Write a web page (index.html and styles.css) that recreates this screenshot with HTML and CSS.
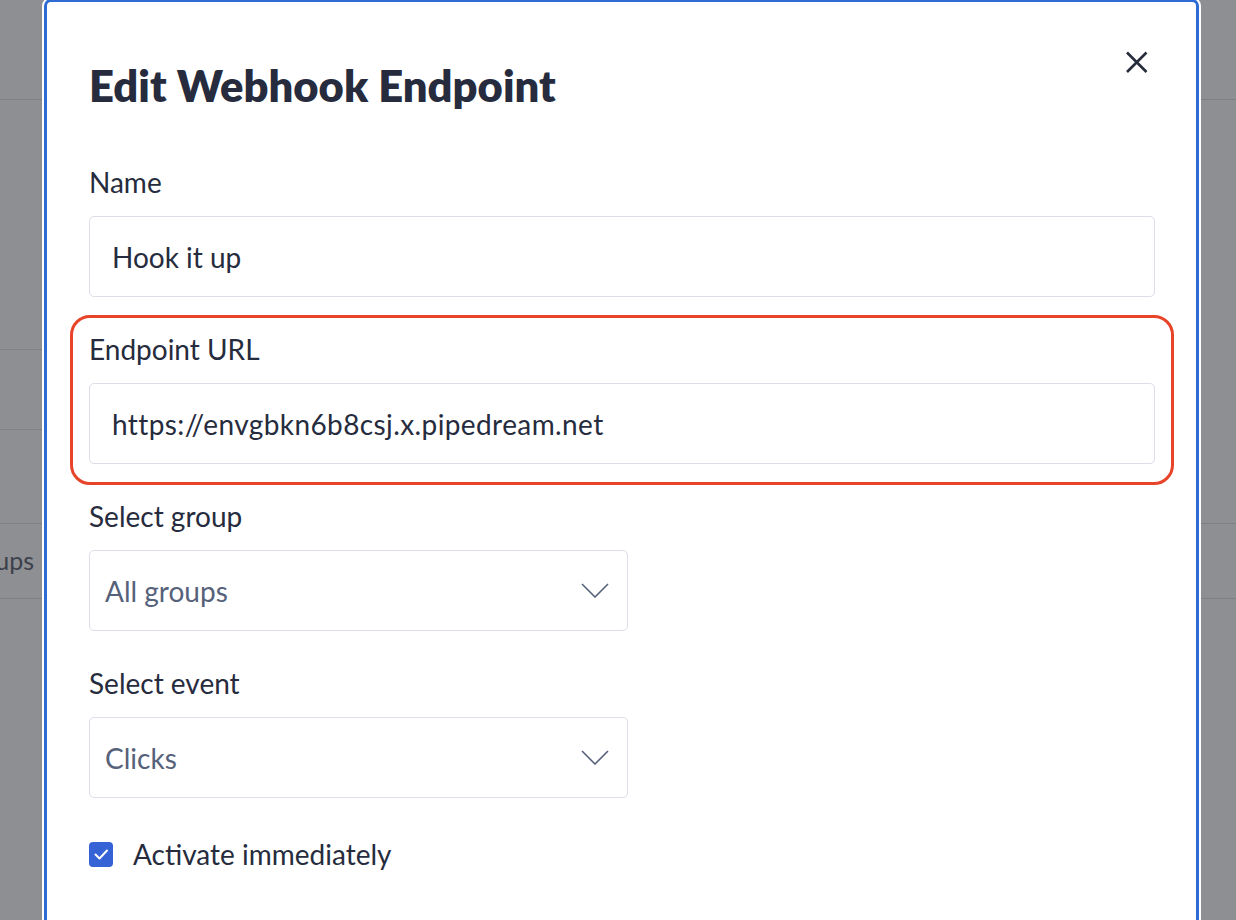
FILE: index.html
```html
<!DOCTYPE html>
<html lang="en">
<head>
<meta charset="utf-8">
<title>Edit Webhook Endpoint</title>
<link rel="stylesheet" href="styles.css">
</head>
<body>
<div class="page">
  <div class="bg-row bg-top"></div>
  <div class="bg-row bg-mid">
    <div class="bg-side">
      <div class="bg-cell bg-c1"></div>
      <div class="bg-cell bg-c2"></div>
    </div>
  </div>
  <div class="bg-row bg-groups"><div class="bg-clip"><span>Groups</span></div></div>
  <div class="bg-row bg-rest"></div>
</div>

<div class="modal">
  <header class="modal-head">
    <h1 class="modal-title">Edit Webhook Endpoint</h1>
    <button class="close" type="button" aria-label="Close">
      <svg viewBox="0 0 32 32" width="32" height="32"><path d="M7 6.5 L26.5 26 M26.5 6.5 L7 26" stroke="#272c3b" stroke-width="2.6" stroke-linecap="butt" fill="none"/></svg>
    </button>
  </header>

  <form class="form">
    <div class="field">
      <div class="label">Name</div>
      <div class="input">Hook it up</div>
    </div>

    <div class="field field-hl">
      <span class="highlight"></span>
      <div class="label">Endpoint URL</div>
      <div class="input input-url">https://envgbkn6b8csj.x.pipedream.net</div>
    </div>

    <div class="field">
      <div class="label">Select group</div>
      <div class="select">
        <span>All groups</span>
        <svg class="chev" viewBox="0 0 28 15" width="28" height="15"><path d="M1 1 L14 14 L27 1" stroke="#56617a" stroke-width="1.6" fill="none"/></svg>
      </div>
    </div>

    <div class="field">
      <div class="label">Select event</div>
      <div class="select">
        <span>Clicks</span>
        <svg class="chev" viewBox="0 0 28 15" width="28" height="15"><path d="M1 1 L14 14 L27 1" stroke="#56617a" stroke-width="1.6" fill="none"/></svg>
      </div>
    </div>

    <div class="check">
      <span class="box">
        <svg viewBox="0 0 24 24" width="24" height="24"><path d="M6.5 12.5 L10.5 16.5 L18 8.5" stroke="#fff" stroke-width="2" fill="none" stroke-linecap="round" stroke-linejoin="round"/></svg>
      </span>
      <span class="check-text">Activate immediately</span>
    </div>
  </form>
</div>
</body>
</html>
```

FILE: styles.css
```css
* { box-sizing: border-box; }

html, body {
  margin: 0;
  padding: 0;
}

body {
  width: 1236px;
  height: 920px;
  overflow: hidden;
  position: relative;
  background: #8e8f93;
  font-family: "Lato", "Liberation Sans", sans-serif;
  color: #262c3d;
}

/* backdrop page (dimmed) */
.page {
  display: flex;
  flex-direction: column;
  height: 920px;
}
.bg-row {
  border-bottom: 1px solid #7f8085;
}
.bg-top { height: 100px; }
.bg-mid { height: 424px; }
.bg-side { width: 60px; display: flex; flex-direction: column; }
.bg-cell { border-bottom: 1px solid #7f8085; }
.bg-c1 { height: 250px; }
.bg-c2 { height: 80px; }
.bg-groups {
  height: 75px;
  display: flex;
  align-items: center;
}
.bg-clip {
  width: 34px;
  overflow: hidden;
  display: flex;
  justify-content: flex-end;
  font-size: 25px;
  line-height: 30px;
  color: #3c404b;
  white-space: nowrap;
  margin-top: -2px;
}
.bg-rest { flex: 1; border-bottom: 0; }

/* modal */
.modal {
  position: absolute;
  left: 44px;
  top: -1px;
  width: 1155px;
  height: 960px;
  background: #fff;
  border: 3px solid #2e6bd3;
  border-radius: 7px;
  box-shadow: 0 0 0 2px #fff;
  padding: 0 41px 0 42px;
}

.modal-head {
  display: flex;
  justify-content: space-between;
  align-items: flex-start;
  padding-top: 44px;
}
.modal-title {
  margin: 15px 0 0 0;
  font-size: 43.5px;
  line-height: 48px;
  font-weight: 800;
  color: #262c3d;
}
.close {
  width: 32px;
  height: 32px;
  padding: 0;
  margin-right: 3px;
  border: 0;
  background: none;
  display: flex;
}

.form {
  display: flex;
  flex-direction: column;
  gap: 36px;
  margin-top: 57px;
}

.field {
  display: flex;
  flex-direction: column;
  gap: 18px;
}
.field-hl { position: relative; }
.highlight {
  position: absolute;
  left: -19px;
  right: -19px;
  top: -18px;
  bottom: -21px;
  border: 3px solid #e7442a;
  border-radius: 20px;
  pointer-events: none;
}

.label {
  font-size: 28px;
  line-height: 32px;
  color: #262c3d;
}

.input {
  height: 81px;
  border: 1px solid #dcdee8;
  border-radius: 5px;
  padding: 0 22px;
  display: flex;
  align-items: center;
  font-size: 28px;
  color: #262c3d;
}
.input-url {
  letter-spacing: 0.4px;
}

.select {
  width: 539px;
  height: 81px;
  border: 1px solid #dcdee8;
  border-radius: 5px;
  padding: 0 18px 0 15px;
  display: flex;
  align-items: center;
  justify-content: space-between;
  font-size: 28px;
  color: #56617a;
}

.check {
  display: flex;
  align-items: center;
  gap: 20px;
  margin-top: 4px;
  height: 32px;
}
.box {
  width: 24px;
  height: 25px;
  background: #3562d5;
  border-radius: 4px;
  display: flex;
  align-items: center;
  justify-content: center;
}
.check-text {
  font-size: 28px;
  color: #262c3d;
}
```
